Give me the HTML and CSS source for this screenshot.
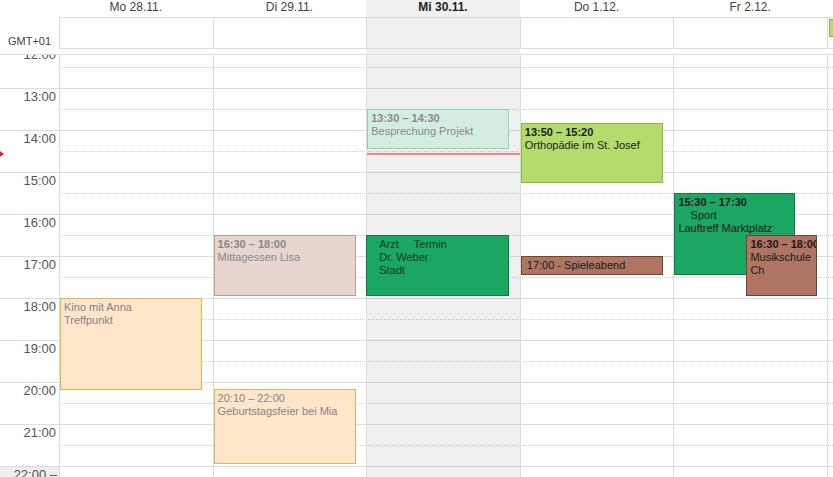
FILE: index.html
```html
<!doctype html>
<html>
	<head>
		<meta charset="utf-8">
		<title>Woche 48</title>
		<link rel="stylesheet" href="styles.css">
	</head>
	<body>

		<div class="week">

			<div class="head">
				<div class="gutter"></div>
				<div class="day">Mo 28.11.</div>
				<div class="day">Di 29.11.</div>
				<div class="day today">Mi 30.11.</div>
				<div class="day">Do 1.12.</div>
				<div class="day">Fr 2.12.</div>
				<div class="day"></div>
			</div>

			<div class="allday">
				<div class="tz">GMT+01</div>
				<div class="cell"></div>
				<div class="cell"></div>
				<div class="cell today"></div>
				<div class="cell"></div>
				<div class="cell"></div>
				<div class="cell"><div class="chip" title="Urlaub"></div></div>
			</div>

			<div class="spacer">
				<div></div><div></div><div></div>
				<div class="today"></div>
				<div></div><div></div><div></div>
			</div>

			<div class="body">
				<div class="grid">

					<div class="rows">
						<div class="hour"><div class="label">12:00</div><div class="slot"></div></div>
						<div class="hour"><div class="label">13:00</div><div class="slot"></div></div>
						<div class="hour"><div class="label">14:00</div><div class="slot"></div></div>
						<div class="hour"><div class="label">15:00</div><div class="slot"></div></div>
						<div class="hour"><div class="label">16:00</div><div class="slot"></div></div>
						<div class="hour"><div class="label">17:00</div><div class="slot"></div></div>
						<div class="hour"><div class="label">18:00</div><div class="slot"></div></div>
						<div class="hour"><div class="label">19:00</div><div class="slot"></div></div>
						<div class="hour"><div class="label">20:00</div><div class="slot"></div></div>
						<div class="hour"><div class="label">21:00</div><div class="slot"></div></div>
						<div class="hour last"><div class="label">22:00 –</div><div class="slot"></div></div>
					</div>

					<div class="mark"><span class="arrow"></span></div>

					<div class="col mo">
						<div class="ev peach" style="top:252px;height:92px">
							<span>Kino mit Anna</span>
							<span>Treffpunkt</span>
						</div>
					</div>

					<div class="col di">
						<div class="ev rose" style="top:189px;height:61px">
							<b>16:30 – 18:00</b>
							<span>Mittagessen Lisa</span>
						</div>
						<div class="ev peach" style="top:343px;height:75px">
							<b class="thin">20:10 – 22:00</b>
							<span>Geburtstagsfeier bei Mia</span>
						</div>
					</div>

					<div class="col mi today">
						<div class="ev mint" style="top:63px;height:40px">
							<b>13:30 – 14:30</b>
							<span>Besprechung Projekt</span>
						</div>
						<div class="now"></div>
						<div class="ev green dim wide" style="top:189px;height:61px">
							<span>Arzt &nbsp; &nbsp; Termin</span>
							<span>Dr. Weber</span>
							<span>Stadt</span>
						</div>
					</div>

					<div class="col do">
						<div class="ev lime" style="top:77px;height:60px">
							<b>13:50 – 15:20</b>
							<span>Orthopädie im St. Josef</span>
						</div>
						<div class="ev brown line" style="top:210px;height:19px">
							<span>17:00 - Spieleabend</span>
						</div>
					</div>

					<div class="col fr">
						<div class="ev green half" style="top:147px;height:82px">
							<b>15:30 – 17:30</b>
							<span>&nbsp; &nbsp; Sport</span>
							<span>Lauftreff Marktplatz</span>
						</div>
						<div class="ev brown narrow" style="top:189px;height:61px">
							<b>16:30 – 18:00</b>
							<span>Musikschule</span>
							<span>Ch</span>
						</div>
					</div>

					<div class="col sa"></div>

				</div>
			</div>

		</div>

	</body>
</html>
```

FILE: styles.css
```css
* {
	margin: 0;
	padding: 0;
	box-sizing: border-box;
}

html,
body {
	height: 100%;
	overflow: hidden;
}

body {
	font-family: "Liberation Sans", Arial, sans-serif;
	font-size: 12px;
	color: #333;
	background: #fff;
}

.week {
	width: 833px;
}

.head,
.allday,
.spacer,
.grid {
	display: grid;
	grid-template-columns: 59px repeat(5, 153.6px) 1fr;
}

.today {
	background: #f0f0f0;
}

/* day names */
.head {
	height: 18px;
}
	.head .day {
		height: 18px;
		line-height: 14px;
		text-align: center;
		color: #444;
		border-bottom: 1px solid #ddd;
		white-space: nowrap;
	}
	.head .day.today {
		font-weight: bold;
		color: #222;
	}

/* all-day row */
.allday {
	height: 31px;
}
	.allday .tz {
		font-size: 11px;
		line-height: 13px;
		color: #444;
		padding: 17px 0 0 8px;
	}
	.allday .cell {
		border-left: 1px solid #ddd;
		border-bottom: 1px solid #ddd;
		padding-top: 1px;
		overflow: hidden;
	}
	.allday .chip {
		height: 18px;
		width: 120px;
		margin-left: 1px;
		background: #b4dc6d;
		border: 1px solid #8cb83e;
	}

.spacer {
	height: 5px;
}

/* time grid */
.body {
	height: 423px;
	border-top: 1px solid #ddd;
	overflow: hidden;
}

.grid {
	margin-top: -9px;
}

.rows {
	grid-column: 1 / -1;
	grid-row: 1;
}
	.hour {
		display: grid;
		grid-template-columns: 59px 1fr;
		height: 42px;
		border-top: 1px solid #ddd;
	}
	.hour .label {
		text-align: right;
		padding-right: 3px;
		font-size: 13px;
		line-height: 15px;
		color: #555;
	}
	.hour.last .label {
		background: #eee;
		padding-right: 2px;
	}
	.hour .slot {
		height: 21px;
		border-bottom: 1px dotted #d2d2d2;
	}

.mark {
	grid-column: 1;
	grid-row: 1;
	position: relative;
}
	.mark .arrow {
		position: absolute;
		left: 0;
		top: 105px;
		border-left: 4px solid #c9302c;
		border-top: 3px solid transparent;
		border-bottom: 3px solid transparent;
	}

.col {
	grid-row: 1;
	position: relative;
	border-left: 1px solid #ddd;
}
.col.today {
	background: rgba(0, 0, 0, 0.06);
}
.mo { grid-column: 2; }
.di { grid-column: 3; }
.mi { grid-column: 4; }
.do { grid-column: 5; }
.fr { grid-column: 6; }
.sa { grid-column: 7; }

.now {
	position: absolute;
	left: 0;
	right: 0;
	top: 107px;
	height: 2px;
	background: #f08a7c;
}

/* events */
.ev {
	position: absolute;
	left: 0;
	width: 142px;
	border: 1px solid;
	padding: 2px 3px;
	font-size: 11px;
	line-height: 13px;
	overflow: hidden;
	white-space: nowrap;
}
	.ev b,
	.ev span {
		display: block;
	}
	.ev b {
		font-weight: bold;
	}
	.ev .thin {
		font-weight: normal;
	}
.ev.wide {
	left: -1px;
	width: 143px;
}
.ev.half {
	width: 121px;
}
.ev.narrow {
	left: 72px;
	width: 71px;
	padding-right: 0;
}
.ev.line {
	padding: 2px 5px;
	line-height: 13px;
}

.mint {
	background: #d3ede1;
	border-color: #8fd1b2;
	color: #8a8a8a;
}
.lime {
	background: #b4dc6d;
	border-color: #8cb83e;
	color: #1a1a1a;
}
.green {
	background: #1ba664;
	border-color: #137a45;
	color: #1a1a1a;
}
.green.dim {
	color: #0e3b25;
	padding-left: 12px;
}
.brown {
	background: #ae7562;
	border-color: #6f4431;
	color: #1a1a1a;
}
.rose {
	background: #e6d6cf;
	border-color: #c39b8d;
	color: #888;
}
.peach {
	background: #fee6c9;
	border-color: #e9b35d;
	color: #8a7f86;
}
```
